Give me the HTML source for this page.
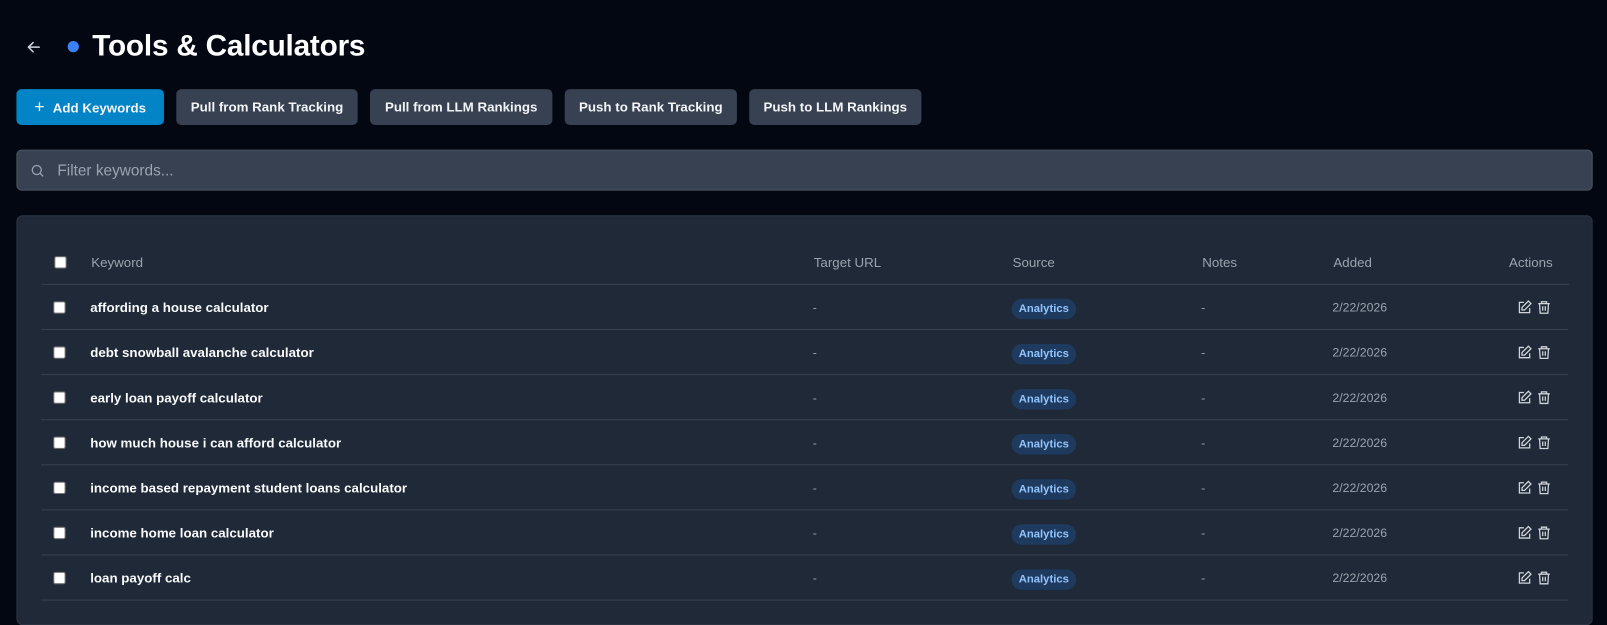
<!DOCTYPE html>
<html><head><meta charset="utf-8"><style>
*{box-sizing:border-box;margin:0;padding:0}
body{width:1607px;height:596px;overflow:hidden;background:#030712;font-family:"Liberation Sans",sans-serif;color:#fff;position:relative}
#w{position:absolute;left:0;top:0;width:1568px;height:582px;transform:scale(1.0249);transform-origin:0 0}
.back{position:absolute;left:24px;top:37px}
.dot{position:absolute;left:66px;top:40px;width:11px;height:11px;border-radius:50%;background:#3b82f6}
h1{position:absolute;left:90px;top:29px;font-size:29px;font-weight:bold;letter-spacing:-0.2px}
.btn{position:absolute;top:87px;height:35px;border-radius:5px;background:#374151;font-size:13px;font-weight:bold;line-height:35px;text-align:center;color:#f3f4f6}
.search{position:absolute;left:16px;top:146px;width:1538px;height:40px;border-radius:5px;background:#374151;border:1px solid #4b5563}
.search span{position:absolute;left:39px;top:11px;font-size:15px;color:#9ca3af}
.panel{position:absolute;left:16px;top:210px;width:1538px;height:400px;border-radius:6px;background:#1f2937;border:1px solid #2b3544}
.row{position:absolute;left:24px;width:1490px;height:44px;border-bottom:1px solid #374151;font-size:13px}
.row>*{position:absolute;top:50%;transform:translateY(-50%)}
.cb{left:12px;width:12px;height:12px;background:#fff;border-radius:2px;border:1px solid #767676}
.kw{left:48px;font-weight:bold;color:#f9fafb}
.h{color:#9ca3af;font-size:13px}
.c1{left:753px}.c2{left:947px}.c3{left:1132px}.c4{left:1260px}
.dash{color:#9ca3af;font-size:12px}
.date{color:#9ca3af;font-size:12px}
.badge{background:#1e3a5f;color:#93c5fd;font-size:11px;font-weight:bold;padding:4px 7px;border-radius:10px}
.act{right:16px;display:flex;gap:4px}
</style></head><body><div id="w">
<svg class="back" width="18" height="18" viewBox="0 0 24 24" fill="none" stroke="#d1d5db" stroke-width="2" stroke-linecap="round"><path d="M19 12H5M11 6l-6 6 6 6"/></svg>
<div class="dot"></div>
<h1>Tools &amp; Calculators</h1>
<div class="btn" style="left:16px;width:144px;background:#0284c7"><span style="font-size:17px;font-weight:normal;margin-right:8px">+</span>Add Keywords</div>
<div class="btn" style="left:172px;width:177px">Pull from Rank Tracking</div>
<div class="btn" style="left:361px;width:178px">Pull from LLM Rankings</div>
<div class="btn" style="left:551px;width:168px">Push to Rank Tracking</div>
<div class="btn" style="left:731px;width:168px">Push to LLM Rankings</div>
<div class="search"><svg style="position:absolute;left:12px;top:12px" width="15" height="15" viewBox="0 0 24 24" fill="none" stroke="#9ca3af" stroke-width="2"><circle cx="11" cy="11" r="7"/><path d="M21 21l-5-5"/></svg><span>Filter keywords...</span></div>
<div class="panel">
<div class="row" style="top:23px"><div class="cb"></div><div class="kw h" style="font-weight:normal;color:#9ca3af">Keyword</div><div class="h c1">Target URL</div><div class="h c2">Source</div><div class="h c3">Notes</div><div class="h c4">Added</div><div class="h" style="right:16px">Actions</div></div>
</div>
<div id="rows"></div>
</div>
<script>
const k=["affording a house calculator","debt snowball avalanche calculator","early loan payoff calculator","how much house i can afford calculator","income based repayment student loans calculator","income home loan calculator","loan payoff calc"];
let h="";k.forEach((t,i)=>{h+=`<div class="row" style="left:40px;top:${278+i*44}px"><div class="cb"></div><div class="kw">${t}</div><div class="dash c1">-</div><div class="c2"><span class="badge">Analytics</span></div><div class="dash c3">-</div><div class="date c4">2/22/2026</div><div class="act"><svg width="15" height="15" viewBox="0 0 24 24" fill="none" stroke="#d1d5db" stroke-width="2"><path d="M11 4H4v16h16v-7"/><path d="M18 2l4 4-10 10H8v-4z"/></svg><svg width="15" height="15" viewBox="0 0 24 24" fill="none" stroke="#d1d5db" stroke-width="2"><path d="M3 6h18M8 6V3h8v3M5 6l1 15h12l1-15M10 10v7M14 10v7"/></svg></div></div>`});
document.getElementById("rows").innerHTML=h;
</script>
</body></html>
